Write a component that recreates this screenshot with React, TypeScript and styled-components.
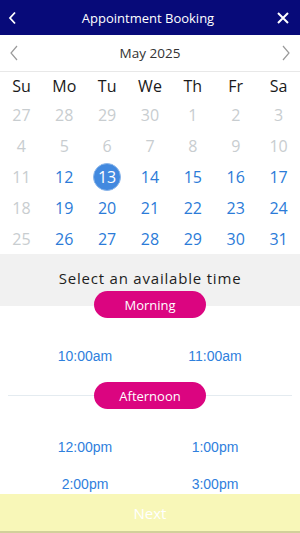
import styled, { createGlobalStyle } from "styled-components";

const GlobalStyle = createGlobalStyle`
  html, body, #root {
    margin: 0;
    padding: 0;
    height: 100%;
  }
  body {
    font-family: "Open Sans", "Liberation Sans", sans-serif;
    background: #ffffff;
  }
`;

const weekdays = ["Su", "Mo", "Tu", "We", "Th", "Fr", "Sa"];

type Day = { n: number; active: boolean; selected?: boolean };

const buildDays = (): Day[] => {
  const days: Day[] = [];
  [27, 28, 29, 30].forEach((n) => days.push({ n, active: false }));
  for (let n = 1; n <= 31; n++) {
    const sunday = (n + 3) % 7 === 0;
    days.push({ n, active: n >= 12 && !sunday, selected: n === 13 });
  }
  return days;
};

const sections = [
  { title: "Morning", times: ["10:00am", "11:00am"], first: true },
  { title: "Afternoon", times: ["12:00pm", "1:00pm", "2:00pm", "3:00pm"], first: false },
];

export default function App() {
  const days = buildDays();
  return (
    <>
      <GlobalStyle />
      <Screen>
        <Header>
          <IconButton aria-label="back">
            <svg width="10" height="14" viewBox="0 0 10 14">
              <polyline points="7,1.5 2,7 7,12.5" fill="none" stroke="#fff" strokeWidth="1.8" />
            </svg>
          </IconButton>
          <Title>Appointment Booking</Title>
          <IconButton aria-label="close">
            <svg width="12" height="12" viewBox="0 0 12 12">
              <path d="M1 1 L11 11 M11 1 L1 11" stroke="#fff" strokeWidth="2" />
            </svg>
          </IconButton>
        </Header>

        <Body>
          <MonthBar>
            <NavArrow>
              <svg width="10" height="16" viewBox="0 0 10 16">
                <polyline points="8,1 2,8 8,15" fill="none" stroke="#9a9a9a" strokeWidth="1.2" />
              </svg>
            </NavArrow>
            <MonthLabel>May 2025</MonthLabel>
            <NavArrow>
              <svg width="10" height="16" viewBox="0 0 10 16">
                <polyline points="2,1 8,8 2,15" fill="none" stroke="#9a9a9a" strokeWidth="1.2" />
              </svg>
            </NavArrow>
          </MonthBar>

          <WeekRow>
            {weekdays.map((d) => (
              <WeekDay key={d}>{d}</WeekDay>
            ))}
          </WeekRow>
          <DayGrid>
            {days.map((d, i) => (
              <DayCell key={i}>
                <DayNumber $active={d.active} $selected={!!d.selected}>
                  {d.n}
                </DayNumber>
              </DayCell>
            ))}
          </DayGrid>

          <Prompt>Select an available time</Prompt>

          {sections.map((s) => (
            <Section key={s.title} $first={s.first}>
              <SectionHead $line={!s.first}>
                <Pill>{s.title}</Pill>
              </SectionHead>
              <TimeGrid>
                {s.times.map((t) => (
                  <TimeSlot key={t}>{t}</TimeSlot>
                ))}
              </TimeGrid>
            </Section>
          ))}
        </Body>

        <NextBar>Next</NextBar>
      </Screen>
    </>
  );
}

const Screen = styled.div`
  height: 100vh;
  display: flex;
  flex-direction: column;
  overflow: hidden;
`;

const Header = styled.div`
  height: 35px;
  flex-shrink: 0;
  background: #070a79;
  display: flex;
  align-items: center;
  justify-content: space-between;
  padding: 0 10px 0 6px;
`;

const IconButton = styled.button`
  background: none;
  border: 0;
  padding: 0;
  width: 14px;
  height: 20px;
  display: flex;
  align-items: center;
  justify-content: center;
`;

const Title = styled.div`
  color: #ffffff;
  font-size: 13px;
  font-family: "Open Sans", sans-serif;
`;

const Body = styled.div`
  flex: 1;
  overflow: hidden;
`;

const MonthBar = styled.div`
  height: 36px;
  display: flex;
  align-items: center;
  justify-content: space-between;
  padding: 0 9px;
  border-bottom: 1px solid #e8e8e8;
`;

const NavArrow = styled.div`
  width: 10px;
  display: flex;
`;

const MonthLabel = styled.div`
  font-size: 13.5px;
  color: #333333;
`;

const WeekRow = styled.div`
  display: grid;
  grid-template-columns: repeat(7, 1fr);
  height: 27px;
  align-items: center;
`;

const WeekDay = styled.div`
  text-align: center;
  font-size: 16px;
  color: #1a1a1a;
`;

const DayGrid = styled.div`
  display: grid;
  grid-template-columns: repeat(7, 1fr);
  grid-auto-rows: 31px;
`;

const DayCell = styled.div`
  display: flex;
  align-items: center;
  justify-content: center;
`;

const DayNumber = styled.div<{ $active: boolean; $selected: boolean }>`
  width: 28px;
  height: 28px;
  border-radius: 50%;
  display: flex;
  align-items: center;
  justify-content: center;
  font-size: 16px;
  box-sizing: border-box;
  color: ${(p) => (p.$selected ? "#ffffff" : p.$active ? "#2b7bd8" : "#c8cdd0")};
  background: ${(p) => (p.$selected ? "#4289df" : "transparent")};
  border: ${(p) => (p.$selected ? "1px solid #8bb6ea" : "none")};
`;

const Prompt = styled.div`
  background: #f1f1f1;
  height: 52px;
  box-sizing: border-box;
  padding-bottom: 4px;
  display: flex;
  align-items: center;
  justify-content: center;
  font-size: 15px;
  letter-spacing: 0.8px;
  color: #1e1e1e;
`;

const Section = styled.div<{ $first: boolean }>`
  display: flex;
  flex-direction: column;
  margin-top: ${(p) => (p.$first ? "-15px" : "8px")};
`;

const SectionHead = styled.div<{ $line: boolean }>`
  display: flex;
  justify-content: center;
  margin: 0 8px;
  background: ${(p) =>
    p.$line ? "linear-gradient(#e4ebf0, #e4ebf0) center / 100% 1px no-repeat" : "none"};
`;

const Pill = styled.div`
  width: 112px;
  height: 27px;
  border-radius: 14px;
  background: #db0580;
  color: #ffffff;
  font-size: 13px;
  display: flex;
  align-items: center;
  justify-content: center;
`;

const TimeGrid = styled.div`
  display: grid;
  grid-template-columns: 1fr 1fr;
  grid-auto-rows: 37px;
  padding: 19px 20px 0;
`;

const TimeSlot = styled.div`
  display: flex;
  align-items: center;
  justify-content: center;
  font-family: "Liberation Sans", Arial, sans-serif;
  font-size: 14px;
  color: #2f80dd;
`;

const NextBar = styled.div`
  height: 37px;
  flex-shrink: 0;
  background: #f8f7b8;
  border-bottom: 2px solid #d2d09a;
  display: flex;
  align-items: center;
  justify-content: center;
  color: #ffffff;
  font-size: 15px;
`;
